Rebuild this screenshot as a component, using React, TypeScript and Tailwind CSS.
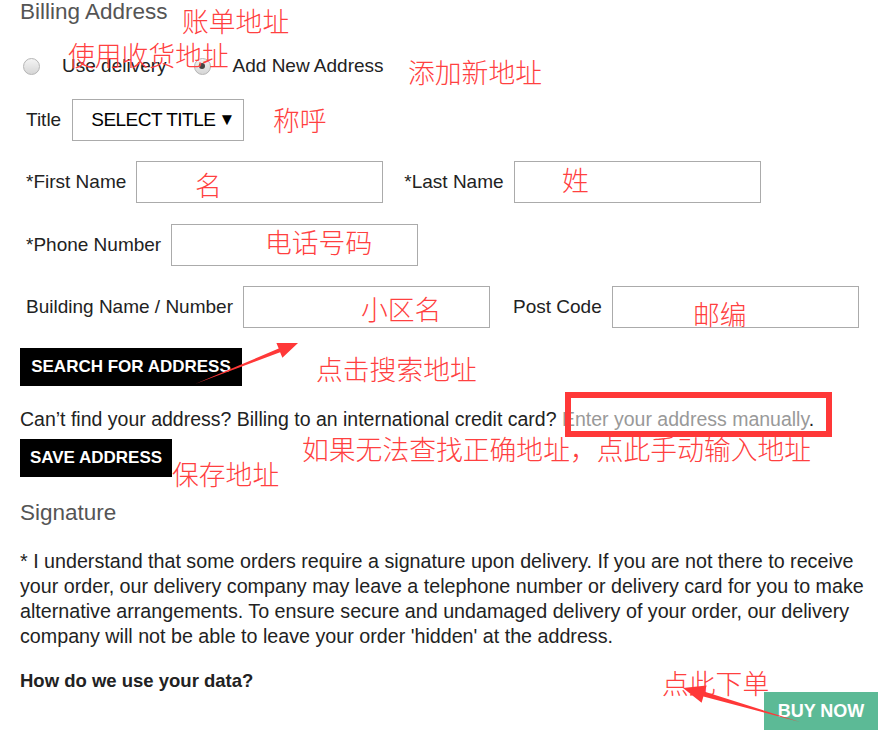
import React from 'react';

const sans = { fontFamily: '"Liberation Sans", Arial, sans-serif' };

function Radio({ checked = false }: { checked?: boolean }) {
  return (
    <span className="flex h-[17px] w-[17px] items-center justify-center rounded-full border border-[#b5b5b5] bg-gradient-to-b from-[#f4f4f4] to-[#d6d6d6]">
      {checked && <span className="h-[6px] w-[6px] rounded-full bg-[#444]" />}
    </span>
  );
}

function Field({ label, width = 'w-[247px]' }: { label: string; width?: string }) {
  return (
    <div className="flex items-center">
      <span className="text-[19px] text-[#222]">{label}</span>
      <div className={`ml-[10px] ${width} h-[42px] border border-[#ababab] bg-white`} />
    </div>
  );
}

// red notes drawn on top of the screenshot
function Note({ text, x, y }: { text: string; x: number; y: number }) {
  return (
    <span
      className="absolute whitespace-nowrap text-[26.8px] leading-none text-[#ff4040]"
      style={{ left: x, top: y, fontFamily: '"Noto Sans CJK SC", sans-serif', fontWeight: 300 }}
    >
      {text}
    </span>
  );
}

export default function App() {
  return (
    <div className="relative h-[749px] w-[890px] overflow-hidden bg-white" style={sans}>
      <div className="flex flex-col px-5">
        <h2 className="text-[22.5px] leading-[24px] text-[#555]">Billing Address</h2>

        {/* address choice */}
        <div className="mt-[31px] flex h-[22px] items-center pl-[3px] text-[19px] leading-[22px] text-[#222]">
          <Radio />
          <span className="ml-[22px]">Use delivery</span>
          <span className="ml-[27px]"><Radio checked /></span>
          <span className="ml-[22px]">Add New Address</span>
        </div>

        <div className="mt-[22px] flex items-center pl-[6px]">
          <span className="text-[19px] text-[#222]">Title</span>
          <div className="ml-[11px] flex h-[42px] w-[172px] items-center justify-between border border-[#ababab] pl-[18px] pr-[8px]">
            <span className="text-[19px] font-medium tracking-[-0.5px] text-black">SELECT TITLE</span>
            <span className="text-[17px] text-black">▼</span>
          </div>
        </div>

        <div className="mt-[20px] flex items-center pl-[6px]">
          <Field label="*First Name" />
          <div className="ml-[21px]">
            <Field label="*Last Name" />
          </div>
        </div>

        <div className="mt-[21px] flex items-center pl-[6px]">
          <Field label="*Phone Number" />
        </div>

        <div className="mt-[20px] flex items-center pl-[6px]">
          <Field label="Building Name / Number" />
          <div className="ml-[23px]">
            <Field label="Post Code" />
          </div>
        </div>

        <button className="mt-[20px] flex h-[38px] w-[222px] items-center justify-center bg-black text-[17px] font-bold text-white">
          SEARCH FOR ADDRESS
        </button>

        <p className="mt-[22px] whitespace-nowrap text-[19.5px] leading-[22px] text-[#222]">
          Can’t find your address? Billing to an international credit card?{' '}
          <span className="text-[#999]">Enter your address manually</span>.
        </p>

        <button className="mt-[9px] flex h-[38px] w-[152px] items-center justify-center bg-black text-[17px] font-bold text-white">
          SAVE ADDRESS
        </button>

        <h2 className="mt-[24px] text-[22.5px] leading-[24px] text-[#555]">Signature</h2>

        <p className="mt-[24px] w-[860px] text-[19.7px] leading-[25px] text-[#222]">
          * I understand that some orders require a signature upon delivery. If you are not there to receive
          your order, our delivery company may leave a telephone number or delivery card for you to make
          alternative arrangements. To ensure secure and undamaged delivery of your order, our delivery
          company will not be able to leave your order 'hidden' at the address.
        </p>

        <p className="mt-[21px] text-[18.5px] font-bold leading-[22px] text-[#222]">How do we use your data?</p>

        <div className="flex justify-end">
          <button className="-mr-2 flex h-[38px] w-[114px] items-center justify-center bg-[#5cba96] text-[18px] font-bold text-white">
            BUY NOW
          </button>
        </div>
      </div>

      {/* annotations */}
      <div className="pointer-events-none absolute left-[565px] top-[392px] h-[45px] w-[267px] border-[6px] border-[#ff3838]" />
      <Note text="账单地址" x={182} y={8} />
      <Note text="使用收货地址" x={68} y={42} />
      <Note text="添加新地址" x={408} y={59} />
      <Note text="称呼" x={273} y={107} />
      <Note text="名" x={195} y={172} />
      <Note text="姓" x={562} y={167} />
      <Note text="电话号码" x={265} y={229} />
      <Note text="小区名" x={361} y={296} />
      <Note text="邮编" x={693} y={301} />
      <Note text="点击搜索地址" x={316} y={356} />
      <Note text="如果无法查找正确地址，点此手动输入地址" x={302} y={436} />
      <Note text="保存地址" x={172} y={461} />
      <Note text="点此下单" x={662} y={670} />
      <svg className="pointer-events-none absolute left-0 top-0" width="890" height="749">
        <polygon points="195,384 278.7,348.5 276.4,343 298,343 282.4,357.8 280.1,352.3" fill="#ff3838" />
        <polygon points="800,722 704.8,691.7 706.6,685.5 683,688 701.6,702.7 703.4,696.5" fill="#ff3838" />
      </svg>
    </div>
  );
}
